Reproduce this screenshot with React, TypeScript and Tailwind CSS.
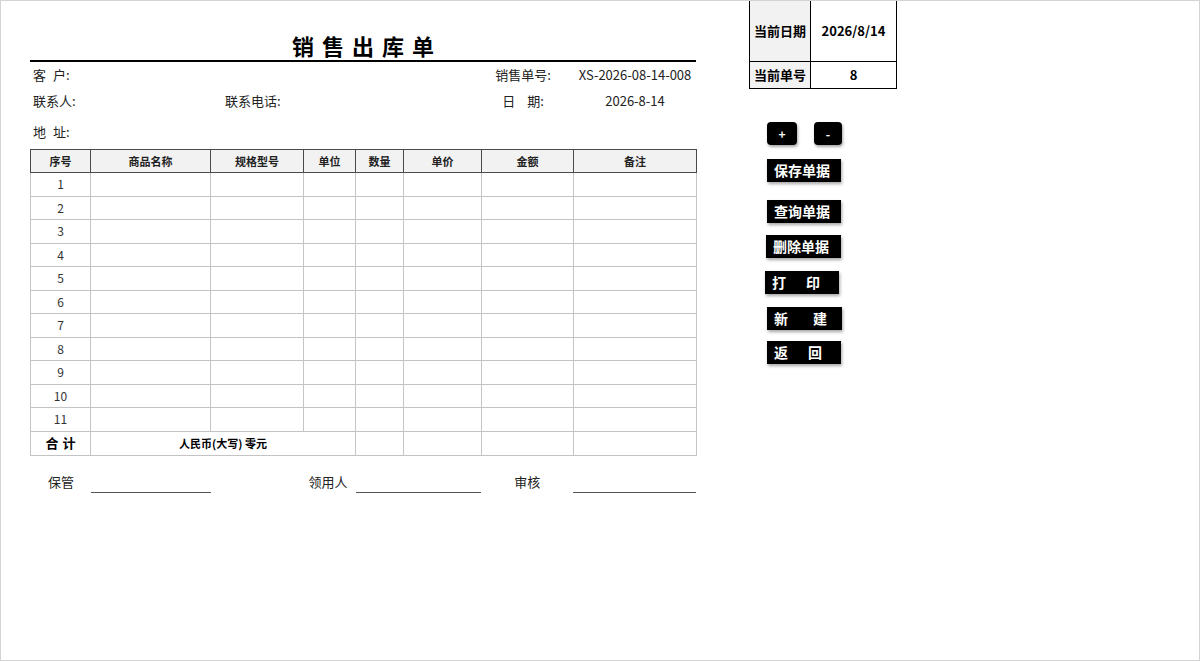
import React from 'react';

const font = { fontFamily: '"Noto Sans CJK SC", "Noto Sans", sans-serif' };

const cols = [60, 120, 93, 52, 48, 78, 92, 123];
const headers = ['序号', '商品名称', '规格型号', '单位', '数量', '单价', '金额', '备注'];
const rows = Array.from({ length: 11 }, (_, i) => i + 1);

function Gap({ w }: { w: string }) {
  return <span className={`inline-block ${w}`} />;
}

function ActionButton({ label, className }: { label: React.ReactNode; className: string }) {
  return (
    <div
      className={`h-[23px] w-[74px] bg-black text-white text-[14px] font-bold leading-[23px] shadow-[1px_2px_3px_rgba(0,0,0,0.35)] whitespace-nowrap ${className}`}
    >
      {label}
    </div>
  );
}

export default function App() {
  return (
    <div className="w-[1200px] h-[661px] overflow-hidden bg-white border border-[#d4d4d4] text-[#222]" style={font}>
      <div className="flex pl-[29px]">
        {/* left: the form */}
        <div className="w-[666px] flex flex-col">
          <div className="h-[59px] flex items-end justify-center pb-[1px]">
            <span className="text-[22px] font-bold tracking-[8px] leading-[28px] text-black pl-[8px]">销售出库单</span>
          </div>
          <div className="h-[2px] bg-black" />

          <div className="h-[26px] flex items-center text-[13px] pl-[3px]">
            <span className="w-[192px]">客<Gap w="w-[7px]" />户:</span>
            <span className="w-[255px]" />
            <span className="w-[86px] text-center">销售单号:</span>
            <span className="w-[120px] ml-[9px] text-center">XS-2026-08-14-008</span>
          </div>
          <div className="h-[26px] flex items-center text-[13px] pl-[3px]">
            <span className="w-[192px]">联系人:</span>
            <span className="w-[255px]">联系电话:</span>
            <span className="w-[86px] text-center">日<Gap w="w-[12px]" />期:</span>
            <span className="w-[120px] ml-[9px] text-center">2026-8-14</span>
          </div>
          <div className="h-[28px] mt-[4px] flex items-center text-[13px] pl-[3px]">
            <span>地<Gap w="w-[7px]" />址:</span>
          </div>

          <table className="mt-[3px] border-collapse table-fixed w-[666px]">
            <colgroup>
              {cols.map((w, i) => (
                <col key={i} style={{ width: w }} />
              ))}
            </colgroup>
            <thead>
              <tr className="h-[23px] bg-[#f2f2f2]">
                {headers.map((h) => (
                  <th key={h} className="border border-[#4a4a4a] text-[11px] font-bold text-[#222] p-0">
                    {h}
                  </th>
                ))}
              </tr>
            </thead>
            <tbody>
              {rows.map((n) => (
                <tr key={n} className="h-[23.5px]">
                  <td className="border border-[#c4c4c4] text-center text-[12px] text-[#333] p-0">{n}</td>
                  {cols.slice(1).map((_, i) => (
                    <td key={i} className="border border-[#c4c4c4] p-0" />
                  ))}
                </tr>
              ))}
              <tr className="h-[24px]">
                <td className="border border-[#c4c4c4] text-center text-[13px] font-bold text-black p-0">合<Gap w="w-[4px]" />计</td>
                <td colSpan={3} className="border border-[#c4c4c4] text-center text-[11px] font-bold text-black p-0">
                  人民币(大写) 零元
                </td>
                <td className="border border-[#c4c4c4] p-0" />
                <td className="border border-[#c4c4c4] p-0" />
                <td className="border border-[#c4c4c4] p-0" />
                <td className="border border-[#c4c4c4] p-0" />
              </tr>
            </tbody>
          </table>

          <div className="mt-[15px] h-[22px] flex items-end text-[13px] text-[#222]">
            <span className="w-[18px]" />
            <span className="w-[43px] leading-[22px] self-start">保管</span>
            <span className="w-[120px] border-b-[1.5px] border-[#555]" />
            <span className="w-[98px]" />
            <span className="w-[47px] leading-[22px] self-start">领用人</span>
            <span className="w-[126px] border-b-[1.5px] border-[#555]" />
            <span className="w-[33px]" />
            <span className="w-[59px] leading-[22px] self-start">审核</span>
            <span className="w-[123px] border-b-[1.5px] border-[#555]" />
          </div>
        </div>

        {/* right: status and actions */}
        <div className="ml-[53px] w-[148px] flex flex-col -mt-[1px]">
          <div className="border border-black text-[13px] font-bold text-black">
            <div className="flex h-[61px] border-b border-black">
              <div className="w-[61px] bg-[#f2f2f2] border-r border-black flex items-center justify-center">当前日期</div>
              <div className="flex-1 flex items-center justify-center">2026/8/14</div>
            </div>
            <div className="flex h-[26px]">
              <div className="w-[61px] bg-[#f2f2f2] border-r border-black flex items-center justify-center">当前单号</div>
              <div className="flex-1 flex items-center justify-center">8</div>
            </div>
          </div>

          <div className="mt-[33px] ml-[18px] flex gap-[17px]">
            <div className="w-[30px] h-[23px] rounded-[4px] bg-black text-white text-[12px] font-bold flex items-center justify-center shadow-[1px_2px_3px_rgba(0,0,0,0.35)]">+</div>
            <div className="w-[28px] h-[23px] rounded-[4px] bg-black text-white text-[12px] font-bold flex items-center justify-center shadow-[1px_2px_3px_rgba(0,0,0,0.35)]">-</div>
          </div>

          <ActionButton className="mt-[14px] ml-[18px] pl-[7px]" label="保存单据" />
          <ActionButton className="mt-[18px] ml-[18px] pl-[7px]" label="查询单据" />
          <ActionButton className="mt-[12px] ml-[17px] pl-[7px] w-[75px]" label="删除单据" />
          <ActionButton
            className="mt-[13px] ml-[16px] pl-[7px]"
            label={<>打<Gap w="w-[20px]" />印</>}
          />
          <ActionButton
            className="mt-[13px] ml-[18px] pl-[7px] w-[75px]"
            label={<>新<Gap w="w-[25px]" />建</>}
          />
          <ActionButton
            className="mt-[11px] ml-[18px] pl-[7px] w-[73px]"
            label={<>返<Gap w="w-[20px]" />回</>}
          />
        </div>
      </div>
    </div>
  );
}
